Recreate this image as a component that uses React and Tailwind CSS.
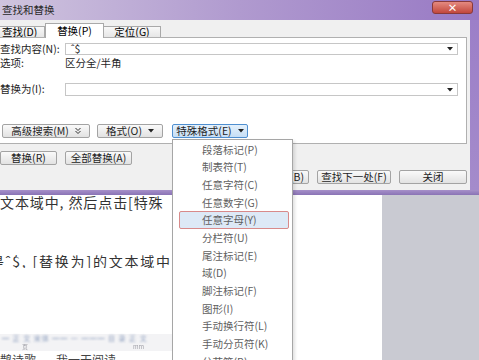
import React from 'react';

const MENU_ITEMS = [
    '段落标记(P)',
    '制表符(T)',
    '任意字符(C)',
    '任意数字(G)',
    '任意字母(Y)',
    '分栏符(U)',
    '尾注标记(E)',
    '域(D)',
    '脚注标记(F)',
    '图形(I)',
    '手动换行符(L)',
    '手动分页符(K)',
    '分节符(B)',
];

function Caret() {
    return (
        <svg width="6" height="4" viewBox="0 0 6 4" className="shrink-0">
            <path d="M0 0h6L3 3.5z" fill="#222" />
        </svg>
    );
}

function DoubleDown() {
    return (
        <svg width="6" height="8" viewBox="0 0 6 8" className="shrink-0">
            <path d="M0.5 1l2.5 2.5L5.5 1M0.5 4l2.5 2.5L5.5 4" fill="none" stroke="#333" strokeWidth="1" />
        </svg>
    );
}

function Btn({ w, children, active }) {
    return (
        <div
            className={`h-[14px] shrink-0 flex items-center justify-center gap-[6px] rounded-[2px] border text-[10.5px] leading-none ${active ? 'border-[#4f8fd0] bg-gradient-to-b from-[#e4f1fc] to-[#c6def5]' : 'border-[#a3a3a3] bg-gradient-to-b from-[#fafafa] to-[#e2e2e2]'}`}
            style={{ width: w }}
        >
            {children}
        </div>
    );
}

function ComboInput({ value }) {
    return (
        <div className="flex-1 h-full flex items-center border border-[#c6c6c6] bg-white pl-[5px] pr-[4px]">
            <span className="flex-1 text-[10.5px] leading-none">{value}</span>
            <Caret />
        </div>
    );
}

function Dialog() {
    return (
        <div className="flex flex-col h-[195px] shrink-0">
            {/* title bar */}
            <div className="h-[20px] flex bg-gradient-to-r from-[#cfc4de] via-[#b09acf] to-[#9879c4]">
                <span className="pl-[2px] pt-[3px] text-[10.5px] text-[#2a2a2a] leading-[14px]">查找和替换</span>
                <div className="ml-auto mr-[6px] mt-[1px] w-[41px] h-[13px] rounded-[3px] border border-[#8a3a3a] bg-gradient-to-b from-[#e48a80] to-[#c2463c] flex items-center justify-center text-white text-[10px] font-bold leading-none">
                    ×
                </div>
            </div>

            <div className="flex h-[170px]">
                <div className="w-[470px] bg-[#f0f0f0] flex flex-col">
                    {/* tabs */}
                    <div className="h-[17px] flex items-end text-[10.5px] leading-none">
                        <div className="w-[45px] h-[11px] border border-b-0 border-l-0 border-[#a9a9a9] bg-gradient-to-b from-[#f8f8f8] to-[#e6e6e6] flex items-center pl-[2px]">查找(D)</div>
                        <div className="w-[59px] h-[15px] border border-b-0 border-[#a9a9a9] bg-white flex items-center justify-center relative top-[1px]">替换(P)</div>
                        <div className="w-[57px] h-[11px] border border-b-0 border-l-0 border-[#a9a9a9] bg-gradient-to-b from-[#f8f8f8] to-[#e6e6e6] flex items-center justify-center">定位(G)</div>
                    </div>

                    {/* panel */}
                    <div className="w-[467px] h-[107px] border border-l-0 border-[#b0b0b0] bg-white flex flex-col text-[10.5px] text-[#1e1e1e]">
                        <div className="mt-[5px] h-[12px] flex items-center pr-[8px]">
                            <span className="w-[65px] leading-none">查找内容(N):</span>
                            <ComboInput value="ˆ$" />
                        </div>
                        <div className="mt-[3px] h-[11px] flex items-center">
                            <span className="w-[65px] leading-none">选项:</span>
                            <span className="leading-none">区分全/半角</span>
                        </div>
                        <div className="mt-[14px] h-[13px] flex items-center pr-[8px]">
                            <span className="w-[65px] leading-none">替换为(I):</span>
                            <ComboInput value="" />
                        </div>
                        <div className="mt-[28px] flex items-center pl-[2px] gap-[7px]">
                            <Btn w={88}>
                                <span>高级搜索(M)</span>
                                <DoubleDown />
                            </Btn>
                            <Btn w={66}>
                                <span>格式(O)</span>
                                <Caret />
                            </Btn>
                            <div className="ml-[2px]">
                                <Btn w={76} active>
                                    <span>特殊格式(E)</span>
                                    <Caret />
                                </Btn>
                            </div>
                        </div>
                    </div>

                    {/* lower buttons */}
                    <div className="mt-[7px] flex gap-[8px] text-[#1e1e1e]">
                        <Btn w={57}>替换(R)</Btn>
                        <Btn w={67}>全部替换(A)</Btn>
                    </div>
                    <div className="mt-[5px] flex justify-end gap-[8px] pr-[3px] text-[#1e1e1e]">
                        <Btn w={70}>
                            <span className="ml-auto mr-[4px]">查找(B)</span>
                        </Btn>
                        <Btn w={74}>查找下一处(F)</Btn>
                        <Btn w={68}>关闭</Btn>
                    </div>
                </div>
                <div className="flex-1 bg-gradient-to-b from-[#9c7fc8] to-[#a48bcb]" />
            </div>

            <div className="h-[5px] bg-gradient-to-b from-[#a690c9] to-[#8a73b5]" />
        </div>
    );
}

function Document() {
    return (
        <div className="flex flex-1">
            <div className="w-[382px] bg-white flex flex-col text-[#333]">
                <div className="h-[14px] text-[14px] leading-[14px] tracking-[0.9px] whitespace-nowrap">
                    文本域中, 然后点击[特殊
                </div>
                <div className="w-[172px] mt-[45px] h-[14px] text-[14px] leading-[14px] tracking-[1.8px] whitespace-nowrap overflow-hidden">
                    <span className="ml-[-10px]">是ˆ$, [替换为]的文本域中</span>
                </div>
                <div className="mt-[66px] w-[172px] h-[17px] bg-[#f3f3f5] flex flex-col">
                    <div className="h-[8px] text-[7px] leading-[8px] text-[#8fa0bf] blur-[0.8px] whitespace-nowrap pl-[2px] tracking-[1px]">
                        ━ 正 文 宋体 ━━ 一 ━━━ 目 录 正 文
                    </div>
                    <div className="mt-[1px] h-[7px] flex text-[6px] leading-[7px] text-[#a0a0a8] blur-[0.4px]">
                        <span className="ml-[22px]">页</span>
                        <span className="ml-[105px]">mm</span>
                    </div>
                </div>
                <div className="mt-[3px] text-[12px] leading-[12px] text-[#444] whitespace-nowrap">
                    鹊诗歌——我一天阅读
                </div>
            </div>
            <div className="flex-1 bg-[#c9cad2]" />
        </div>
    );
}

function SpecialMenu() {
    return (
        <div className="absolute left-[172px] top-[139px] w-[121px] h-[240px] border border-[#a6a6a6] bg-white pt-[2px] shadow-[2px_2px_3px_rgba(0,0,0,0.12)]">
            {MENU_ITEMS.map((item, i) => (
                <div key={item} className="h-[17.7px] relative flex items-center pl-[29px] text-[10.5px] leading-none text-[#5f5f5f]">
                    {i === 4 && (
                        <div className="absolute left-[6px] right-[3px] top-[-2px] bottom-[1px] rounded-[2px] border border-[#d88a8a] bg-[#dde9f6]" />
                    )}
                    <span className="relative top-[-1px]">{item}</span>
                </div>
            ))}
        </div>
    );
}

export default function App() {
    return (
        <div className="w-[479px] h-[360px] overflow-hidden relative bg-white flex flex-col font-['Noto_Sans_CJK_SC','Liberation_Sans',sans-serif]">
            <Dialog />
            <Document />
            <SpecialMenu />
        </div>
    );
}
